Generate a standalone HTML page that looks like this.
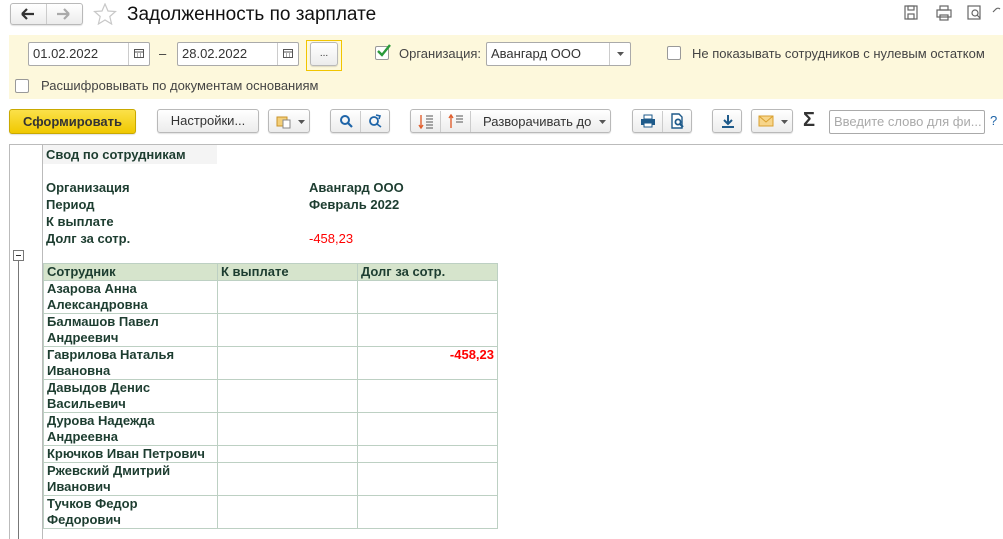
<!DOCTYPE html>
<html><head><meta charset="utf-8"><style>
*{box-sizing:border-box;margin:0;padding:0}
body{width:1003px;height:539px;overflow:hidden;background:#fff;font-family:"Liberation Sans",Arial,sans-serif;font-size:13px;color:#333;position:relative}
.a{position:absolute}
.btn{position:absolute;border:1px solid #b9b9b9;border-radius:3px;background:linear-gradient(#fff,#ececec);height:24px;box-shadow:0 1px 1px rgba(0,0,0,.12)}
.inp{position:absolute;border:1px solid #aaa;border-radius:2px;background:#fff;height:24px;font-size:13px;line-height:22px;padding-left:4px;color:#333}
.cb{position:absolute;width:14px;height:14px;border:1px solid #999;border-radius:2px;background:#fff}
.t{position:absolute;font-weight:bold;color:#1d3d30;font-size:13px;white-space:nowrap}
table{position:absolute;left:43px;top:263px;border-collapse:collapse;font-weight:bold;color:#1d3d30;font-size:13px}
td{border:1px solid #bdd0c3;vertical-align:top;padding:0 3px;line-height:16px;height:33px;white-space:nowrap}
tr.h td,tr.s td{height:17px}
</style></head><body>
<div class="btn" style="left:10px;top:3px;width:73px;height:22px"></div>
<div class="a" style="left:46px;top:4px;width:1px;height:20px;background:#ccc"></div>
<svg class="a" style="left:20px;top:7px" width="60" height="14"><path d="M2 7h12M2 7l5-5M2 7l5 5" stroke="#333" stroke-width="2.2" fill="none"/><path d="M37 7h12M49 7l-5-5M49 7l-5 5" stroke="#aaa" stroke-width="2.2" fill="none"/></svg>
<svg class="a" style="left:93px;top:3px" width="24" height="22"><path d="M12 1l3 7 7.5.5-5.7 5 1.8 7.5L12 17l-6.6 4 1.8-7.5-5.7-5L9 8z" fill="none" stroke="#c8c8c8" stroke-width="1.2"/></svg>
<div class="a" style="left:127px;top:4px;font-size:19px;color:#111">Задолженность по зарплате</div>
<svg class="a" style="left:904px;top:5px" width="100" height="16" fill="none" stroke="#666" stroke-width="1.2"><rect x="1" y="1" width="12" height="13"/><rect x="4" y="9" width="6" height="5"/><rect x="4" y="1" width="6" height="4"/><rect x="33" y="5" width="14" height="7"/><rect x="36" y="1" width="8" height="4"/><rect x="36" y="10" width="8" height="5"/><rect x="64" y="1" width="12" height="13"/><circle cx="71" cy="8" r="3"/><path d="M73 10l3 3"/><path d="M96 4a3 3 0 0 0-4 0l-3 3"/></svg>
<div class="a" style="left:9px;top:35px;width:994px;height:64px;background:#fdf8dc"></div>
<div class="inp" style="left:28px;top:42px;width:122px">01.02.2022</div>
<div class="a" style="left:128px;top:43px;width:1px;height:22px;background:#ccc"></div>
<svg class="a" style="left:134px;top:48px" width="10" height="10"><rect x="0.5" y="1.5" width="9" height="8" fill="none" stroke="#555"/><path d="M0 4h10M3 6h1M6 6h1M3 8h1M6 8h1" stroke="#555"/></svg>
<div class="a" style="left:159px;top:46px">–</div>
<div class="inp" style="left:177px;top:42px;width:122px">28.02.2022</div>
<div class="a" style="left:277px;top:43px;width:1px;height:22px;background:#ccc"></div>
<svg class="a" style="left:283px;top:48px" width="10" height="10"><rect x="0.5" y="1.5" width="9" height="8" fill="none" stroke="#555"/><path d="M0 4h10M3 6h1M6 6h1M3 8h1M6 8h1" stroke="#555"/></svg>
<div class="a" style="left:306px;top:40px;width:36px;height:31px;border:1px solid #f1c500"></div>
<div class="btn" style="left:310px;top:42px;width:28px;height:24px;font-size:10px;text-align:center;line-height:22px">...</div>
<div class="cb" style="left:375px;top:46px"></div>
<svg class="a" style="left:376px;top:43px" width="16" height="16"><path d="M2 8l4 4 8-10" stroke="#2a9a3a" stroke-width="2.4" fill="none"/></svg>
<div class="a" style="left:399px;top:46px;color:#444">Организация:</div>
<div class="inp" style="left:486px;top:42px;width:145px">Авангард ООО</div>
<div class="a" style="left:609px;top:43px;width:1px;height:22px;background:#ccc"></div>
<svg class="a" style="left:617px;top:52px" width="7" height="4"><path d="M0 0h7L3.5 4z" fill="#555"/></svg>
<div class="cb" style="left:667px;top:46px"></div>
<div class="a" style="left:692px;top:46px;color:#444">Не показывать сотрудников с нулевым остатком</div>
<div class="cb" style="left:15px;top:79px"></div>
<div class="a" style="left:41px;top:78px;color:#444">Расшифровывать по документам основаниям</div>
<div class="btn" style="left:9px;top:109px;width:127px;height:25px;background:linear-gradient(#fbe14a,#f0c800);border-color:#c9a900;font-weight:bold;color:#333;text-align:center;line-height:23px">Сформировать</div>
<div class="btn" style="left:157px;top:109px;width:102px;text-align:center;line-height:22px">Настройки...</div>
<div class="btn" style="left:268px;top:109px;width:42px"><svg class="a" style="left:7px;top:4px" width="16" height="15"><rect x="1" y="3" width="10" height="9" fill="#f3cf7a" stroke="#c9932a"/><rect x="7" y="6" width="7" height="8" fill="#fff" stroke="#888"/></svg><svg class="a" style="left:29px;top:10px" width="7" height="4"><path d="M0 0h7L3.5 4z" fill="#555"/></svg></div>
<div class="btn" style="left:330px;top:109px;width:60px"><div class="a" style="left:29px;top:1px;width:1px;height:21px;background:#ccc"></div><svg class="a" style="left:8px;top:4px" width="14" height="14"><circle cx="6" cy="6" r="4" fill="none" stroke="#1e64a8" stroke-width="2"/><path d="M9 9l4 4" stroke="#1e64a8" stroke-width="2.2"/></svg><svg class="a" style="left:37px;top:4px" width="14" height="14"><circle cx="6" cy="7" r="4" fill="none" stroke="#1e64a8" stroke-width="1.8"/><path d="M9 10l4 3M8 1l4 1-1 3" stroke="#1e64a8" stroke-width="1.6" fill="none"/></svg></div>
<div class="btn" style="left:410px;top:109px;width:201px"><div class="a" style="left:29px;top:1px;width:1px;height:21px;background:#ccc"></div><div class="a" style="left:59px;top:1px;width:1px;height:21px;background:#ccc"></div>
<svg class="a" style="left:7px;top:4px" width="16" height="15"><path d="M3 1v12M1 11l2 3 2-3" stroke="#e06030" stroke-width="1.4" fill="none"/><path d="M8 2h7M8 5h7M8 8h7M8 11h7M8 14h7" stroke="#555"/></svg>
<svg class="a" style="left:37px;top:4px" width="16" height="15"><path d="M3 14V2M1 4l2-3 2 3" stroke="#e06030" stroke-width="1.4" fill="none"/><path d="M8 2h7M8 5h7M8 8h7" stroke="#555"/></svg>
<span class="a" style="left:72px;top:4px">Разворачивать до</span><svg class="a" style="left:188px;top:10px" width="7" height="4"><path d="M0 0h7L3.5 4z" fill="#555"/></svg></div>
<div class="btn" style="left:632px;top:109px;width:60px"><div class="a" style="left:29px;top:1px;width:1px;height:21px;background:#ccc"></div><svg class="a" style="left:7px;top:4px" width="16" height="14"><rect x="4" y="1" width="8" height="4" fill="#fff" stroke="#1e5a8a"/><rect x="1" y="5" width="14" height="6" fill="#1e5a8a"/><rect x="4" y="9" width="8" height="4" fill="#fff" stroke="#1e5a8a"/></svg><svg class="a" style="left:37px;top:3px" width="16" height="16"><path d="M2 1h7l3 3v11H2z" fill="#fff" stroke="#1e5a8a" stroke-width="1.4"/><circle cx="8" cy="9" r="2.6" fill="none" stroke="#1e5a8a" stroke-width="1.8"/><path d="M10 11l3 3" stroke="#1e5a8a" stroke-width="2"/></svg></div>
<div class="btn" style="left:712px;top:109px;width:30px"><svg class="a" style="left:7px;top:4px" width="16" height="15"><path d="M8 1v9M4 6l4 4 4-4" stroke="#1e5a8a" stroke-width="2" fill="none"/><path d="M2 13h12" stroke="#1e5a8a" stroke-width="2"/></svg></div>
<div class="btn" style="left:751px;top:109px;width:42px"><svg class="a" style="left:6px;top:5px" width="16" height="12"><rect x="1" y="1" width="14" height="10" fill="#f7d58a" stroke="#d9a030"/><path d="M1 1l7 6 7-6" stroke="#d9a030" fill="none"/></svg><svg class="a" style="left:29px;top:10px" width="7" height="4"><path d="M0 0h7L3.5 4z" fill="#555"/></svg></div>
<div class="a" style="left:803px;top:109px;font-size:20px;color:#333;font-weight:bold">Σ</div>
<div class="inp" style="left:829px;top:110px;width:156px;color:#aaa">Введите слово для фи...</div>
<div class="a" style="left:990px;top:113px;color:#1e64a8">?</div>
<div class="a" style="left:9px;top:144px;width:994px;height:1px;background:#bbb"></div>
<div class="a" style="left:9px;top:144px;width:1px;height:395px;background:#bbb"></div>
<div class="a" style="left:42px;top:144px;width:1px;height:395px;background:#bbb"></div>
<div class="a" style="left:13px;top:250px;width:11px;height:11px;border:1px solid #777;background:#fff"><div class="a" style="left:2px;top:4px;width:5px;height:1px;background:#333"></div></div>
<div class="a" style="left:18px;top:261px;width:1px;height:278px;background:#777"></div>
<div class="a" style="left:43px;top:145px;width:174px;height:19px;background:#f4f4f4"></div>
<div class="t" style="left:46px;top:147px">Свод по сотрудникам</div>
<div class="t" style="left:46px;top:180px">Организация</div>
<div class="t" style="left:46px;top:197px">Период</div>
<div class="t" style="left:46px;top:214px">К выплате</div>
<div class="t" style="left:46px;top:231px">Долг за сотр.</div>
<div class="t" style="left:309px;top:180px">Авангард ООО</div>
<div class="t" style="left:309px;top:197px">Февраль 2022</div>
<div class="t" style="left:309px;top:231px;color:#f00;font-weight:normal">-458,23</div>
<table>
<tr class="h" style="background:#d6e4cc"><td style="width:174px">Сотрудник</td><td style="width:140px">К выплате</td><td style="width:140px">Долг за сотр.</td></tr>
<tr><td>Азарова Анна<br>Александровна</td><td></td><td></td></tr>
<tr><td>Балмашов Павел<br>Андреевич</td><td></td><td></td></tr>
<tr><td>Гаврилова Наталья<br>Ивановна</td><td></td><td style="text-align:right;color:#f00">-458,23</td></tr>
<tr><td>Давыдов Денис<br>Васильевич</td><td></td><td></td></tr>
<tr><td>Дурова Надежда<br>Андреевна</td><td></td><td></td></tr>
<tr class="s"><td>Крючков Иван Петрович</td><td></td><td></td></tr>
<tr><td>Ржевский Дмитрий<br>Иванович</td><td></td><td></td></tr>
<tr><td>Тучков Федор<br>Федорович</td><td></td><td></td></tr>
</table>
</body></html>
